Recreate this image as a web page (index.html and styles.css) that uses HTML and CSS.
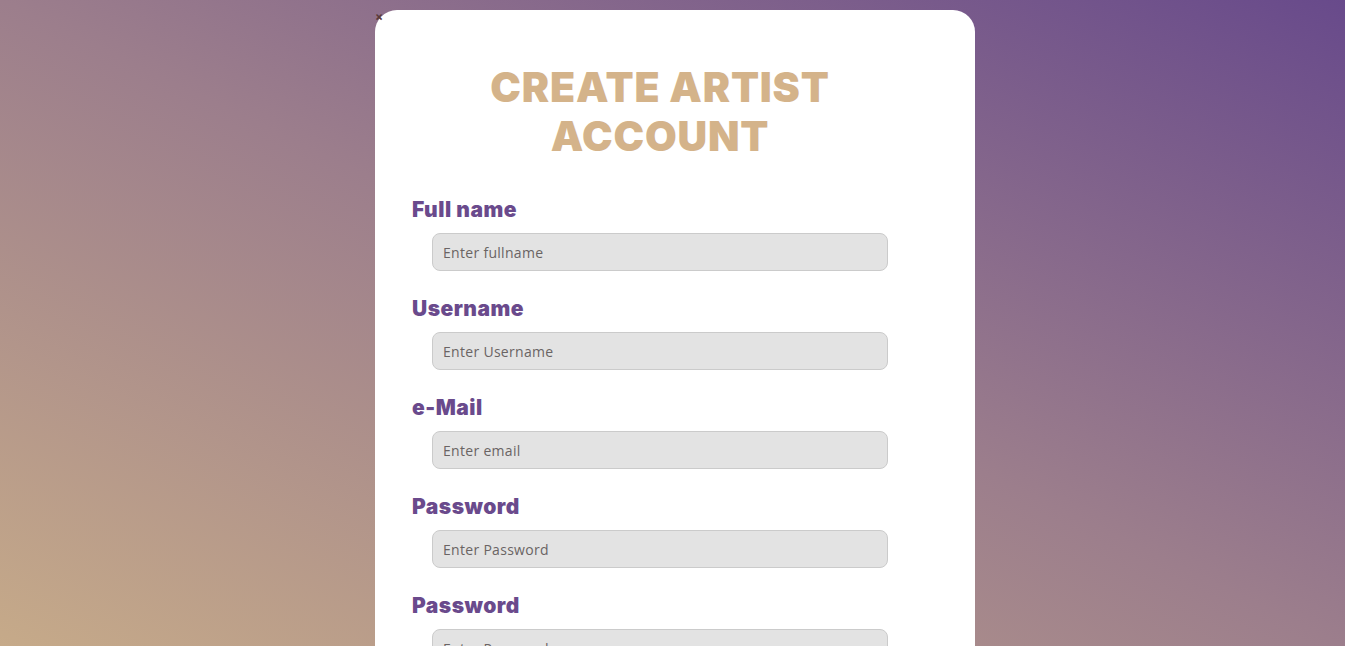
FILE: index.html
```html
<!DOCTYPE html>
<html>
<head>
<meta charset="utf-8">
<link rel="stylesheet" href="styles.css">
</head>
<body>
<div class="screen">
  <span class="close">×</span>
  <main class="card">
    <h1 class="title">CREATE ARTIST<br>ACCOUNT</h1>
    <form class="form">
      <div class="field">
        <label class="label">Full name</label>
        <input class="input" type="text" placeholder="Enter fullname">
      </div>
      <div class="field">
        <label class="label">Username</label>
        <input class="input" type="text" placeholder="Enter Username">
      </div>
      <div class="field">
        <label class="label">e-Mail</label>
        <input class="input" type="text" placeholder="Enter email">
      </div>
      <div class="field">
        <label class="label">Password</label>
        <input class="input" type="password" placeholder="Enter Password">
      </div>
      <div class="field">
        <label class="label">Password</label>
        <input class="input" type="password" placeholder="Enter Password">
      </div>
    </form>
  </main>
</div>
</body>
</html>
```
FILE: styles.css
```css
html, body {
  margin: 0;
  padding: 0;
  background: #fff;
  overflow: hidden;
}
.screen {
  position: relative;
  width: 1345px;
  height: 646px;
  overflow: hidden;
  background: linear-gradient(to top right, #c6aa89 0%, #9c7e8c 50%, #684a8b 100%);
  display: flex;
  justify-content: center;
  padding-top: 10px;
  box-sizing: border-box;
  font-family: Inter, "Open Sans", sans-serif;
}
.close {
  position: absolute;
  left: 375px;
  top: 10px;
  font-size: 12px;
  line-height: 14px;
  color: #5a3a3a;
  font-weight: 700;
}
.card {
  width: 600px;
  margin-left: 5px;
  background: #fff;
  border-radius: 22px 22px 0 0;
  box-sizing: border-box;
  padding: 53px 67px 0 37px;
}
.title {
  margin: 0 0 35px;
  text-align: center;
  color: #d4b38a;
  font-family: Inter, sans-serif;
  font-weight: 900;
  font-size: 41px;
  line-height: 49px;
  letter-spacing: 0.8px;
}
.form {
  display: flex;
  flex-direction: column;
  gap: 24px;
}
.field {
  display: flex;
  flex-direction: column;
  gap: 10px;
}
.label {
  color: #6a4a8c;
  font-family: Inter, sans-serif;
  font-weight: 900;
  font-size: 21px;
  line-height: 27px;
  letter-spacing: 0.5px;
}
.input {
  margin-left: 20px;
  width: 456px;
  height: 38px;
  box-sizing: border-box;
  border: 1px solid #cbcbcb;
  border-radius: 8px;
  background: #e3e3e3;
  padding: 0 10px;
  font-family: "Open Sans", sans-serif;
  font-size: 14px;
  letter-spacing: 0.3px;
  color: #333;
  outline: none;
}
.input::placeholder {
  color: #6a6464;
}
```
